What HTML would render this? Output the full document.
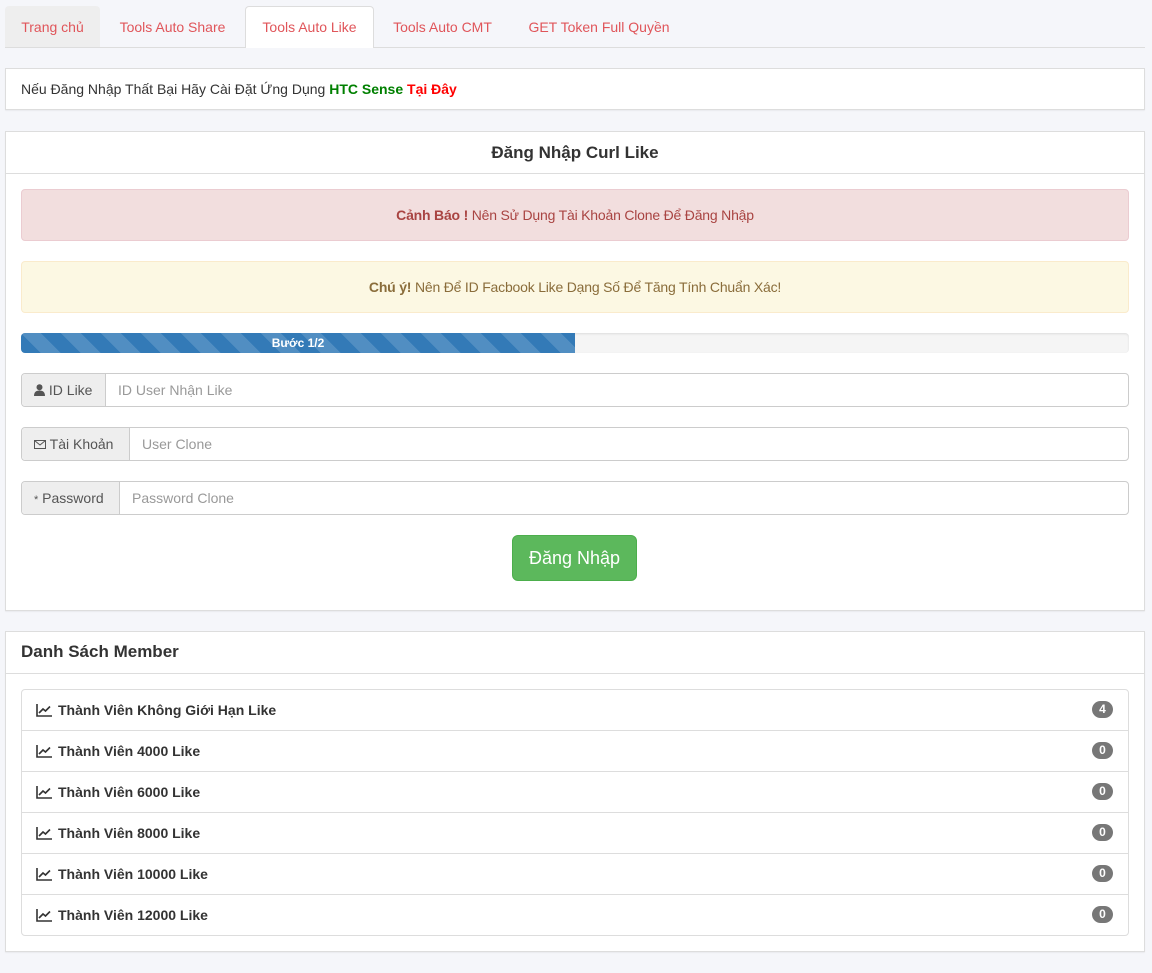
<!DOCTYPE html>
<html><head><meta charset="utf-8"><style>
*{box-sizing:border-box;margin:0;padding:0}
body{width:1152px;height:973px;background:#f5f6fa;font-family:"Liberation Sans",Arial,sans-serif;font-size:14px;color:#333;position:relative;overflow:hidden}
.tabs{position:absolute;left:5px;top:6px;width:1140px;height:42px;border-bottom:1px solid #ddd}
.tab{position:absolute;top:0;height:41px;line-height:42px;color:#e0555a;font-size:14px;text-align:center}
.panel{position:absolute;left:5px;width:1140px;background:#fff;border:1px solid #ddd;box-shadow:0 1px 1px rgba(0,0,0,.05)}
.alert{position:absolute;left:15px;width:1108px;height:52px;line-height:50px;text-align:center;border:1px solid;border-radius:4px;letter-spacing:-0.2px}
.grp{position:absolute;left:15px;width:1108px;height:34px;border:1px solid #ccc;border-radius:4px;background:#fff}
.addon{position:absolute;left:0;top:0;height:32px;line-height:32px;background:#eee;border-right:1px solid #ccc;color:#555;padding-left:12px;border-radius:4px 0 0 4px}
.ph{position:absolute;top:0;line-height:32px;color:#999}
.row{position:absolute;left:0;width:1106px;height:41px;border-top:1px solid #ddd;font-weight:bold;line-height:40px;padding-left:36px;color:#333}
.row:first-child{border-top-color:transparent}
.badge{position:absolute;right:15px;top:11px;width:21px;height:17px;border-radius:9px;background:#777;color:#fff;font-size:12px;line-height:17px;text-align:center}
.ic{position:absolute;left:14px;top:13px}
</style></head><body>
<div class="tabs">
<div class="tab" style="left:0;width:95px;background:#eee;border-radius:4px 4px 0 0">Trang chủ</div>
<div class="tab" style="left:96px;width:143px">Tools Auto Share</div>
<div class="tab" style="left:240px;width:129px;height:42px;background:#fff;border:1px solid #ddd;border-bottom:none;border-radius:4px 4px 0 0;line-height:40px">Tools Auto Like</div>
<div class="tab" style="left:370px;width:135px">Tools Auto CMT</div>
<div class="tab" style="left:506px;width:176px">GET Token Full Quyền</div>
</div>
<div class="panel" style="top:68px;height:42px;padding-left:15px;line-height:40px">Nếu Đăng Nhập Thất Bại Hãy Cài Đặt Ứng Dụng <b style="color:#008000">HTC Sense</b> <b style="color:#f00">Tại Đây</b></div>
<div class="panel" style="top:131px;height:480px">
<div style="height:42px;border-bottom:1px solid #ddd;text-align:center;line-height:41px;font-weight:bold;font-size:17px">Đăng Nhập Curl Like</div>
<div class="alert" style="top:57px;background:#f2dede;border-color:#ebccd1;color:#a94442"><b>Cảnh Báo !</b> Nên Sử Dụng Tài Khoản Clone Để Đăng Nhập</div>
<div class="alert" style="top:129px;background:#fcf8e3;border-color:#faebcc;color:#8a6d3b"><b>Chú ý!</b> Nên Để ID Facbook Like Dạng Số Để Tăng Tính Chuẩn Xác!</div>
<div style="position:absolute;left:15px;top:201px;width:1108px;height:20px;background:#f5f5f5;border-radius:4px;overflow:hidden;box-shadow:inset 0 1px 2px rgba(0,0,0,.1)">
<div style="width:554px;height:20px;background-color:#337ab7;background-image:linear-gradient(45deg,rgba(255,255,255,.15) 25%,transparent 25%,transparent 50%,rgba(255,255,255,.15) 50%,rgba(255,255,255,.15) 75%,transparent 75%,transparent);background-size:40px 40px;color:#fff;font-size:12px;font-weight:bold;text-align:center;line-height:20px">Bước 1/2</div></div>
<div class="grp" style="top:241px"><div class="addon" style="width:84px"><svg width="11" height="12" viewBox="0 0 11 12" style="vertical-align:-1px"><circle cx="5.5" cy="3.2" r="3" fill="#555"/><path d="M0 12 Q0 6.5 5.5 6.5 Q11 6.5 11 12Z" fill="#555"/></svg> ID Like</div><div class="ph" style="left:96px">ID User Nhận Like</div></div>
<div class="grp" style="top:295px"><div class="addon" style="width:108px"><svg width="12" height="9" viewBox="0 0 12 9" style="vertical-align:0"><rect x=".5" y=".5" width="11" height="8" fill="none" stroke="#555"/><path d="M.5 .5 6 5 11.5 .5" fill="none" stroke="#555"/></svg> Tài Khoản</div><div class="ph" style="left:120px">User Clone</div></div>
<div class="grp" style="top:349px"><div class="addon" style="width:98px"><span style="font-size:11px">*</span> Password</div><div class="ph" style="left:110px">Password Clone</div></div>
<div style="position:absolute;left:506px;top:403px;width:125px;height:46px;background:#5cb85c;border:1px solid #4cae4c;border-radius:6px;color:#fff;font-size:18px;line-height:44px;text-align:center">Đăng Nhập</div>
</div>
<div class="panel" style="top:631px;height:321px">
<div style="height:42px;border-bottom:1px solid #ddd;padding-left:15px;line-height:40px;font-weight:bold;font-size:17px">Danh Sách Member</div>
<div style="position:absolute;left:15px;top:57px;width:1108px;height:247px;border:1px solid #ddd;border-radius:4px">
<div class="row" style="top:-1px"><svg class="ic" width="16" height="14" viewBox="0 0 16 14"><path d="M1 1V13H16" fill="none" stroke="#333" stroke-width="1.6"/><path d="M3 10 7 6 9.5 8 14 3.5" fill="none" stroke="#333" stroke-width="1.6"/></svg>Thành Viên Không Giới Hạn Like<span class="badge">4</span></div>
<div class="row" style="top:40px"><svg class="ic" width="16" height="14" viewBox="0 0 16 14"><path d="M1 1V13H16" fill="none" stroke="#333" stroke-width="1.6"/><path d="M3 10 7 6 9.5 8 14 3.5" fill="none" stroke="#333" stroke-width="1.6"/></svg>Thành Viên 4000 Like<span class="badge">0</span></div>
<div class="row" style="top:81px"><svg class="ic" width="16" height="14" viewBox="0 0 16 14"><path d="M1 1V13H16" fill="none" stroke="#333" stroke-width="1.6"/><path d="M3 10 7 6 9.5 8 14 3.5" fill="none" stroke="#333" stroke-width="1.6"/></svg>Thành Viên 6000 Like<span class="badge">0</span></div>
<div class="row" style="top:122px"><svg class="ic" width="16" height="14" viewBox="0 0 16 14"><path d="M1 1V13H16" fill="none" stroke="#333" stroke-width="1.6"/><path d="M3 10 7 6 9.5 8 14 3.5" fill="none" stroke="#333" stroke-width="1.6"/></svg>Thành Viên 8000 Like<span class="badge">0</span></div>
<div class="row" style="top:163px"><svg class="ic" width="16" height="14" viewBox="0 0 16 14"><path d="M1 1V13H16" fill="none" stroke="#333" stroke-width="1.6"/><path d="M3 10 7 6 9.5 8 14 3.5" fill="none" stroke="#333" stroke-width="1.6"/></svg>Thành Viên 10000 Like<span class="badge">0</span></div>
<div class="row" style="top:204px"><svg class="ic" width="16" height="14" viewBox="0 0 16 14"><path d="M1 1V13H16" fill="none" stroke="#333" stroke-width="1.6"/><path d="M3 10 7 6 9.5 8 14 3.5" fill="none" stroke="#333" stroke-width="1.6"/></svg>Thành Viên 12000 Like<span class="badge">0</span></div>
</div>
</div>
</body></html>
